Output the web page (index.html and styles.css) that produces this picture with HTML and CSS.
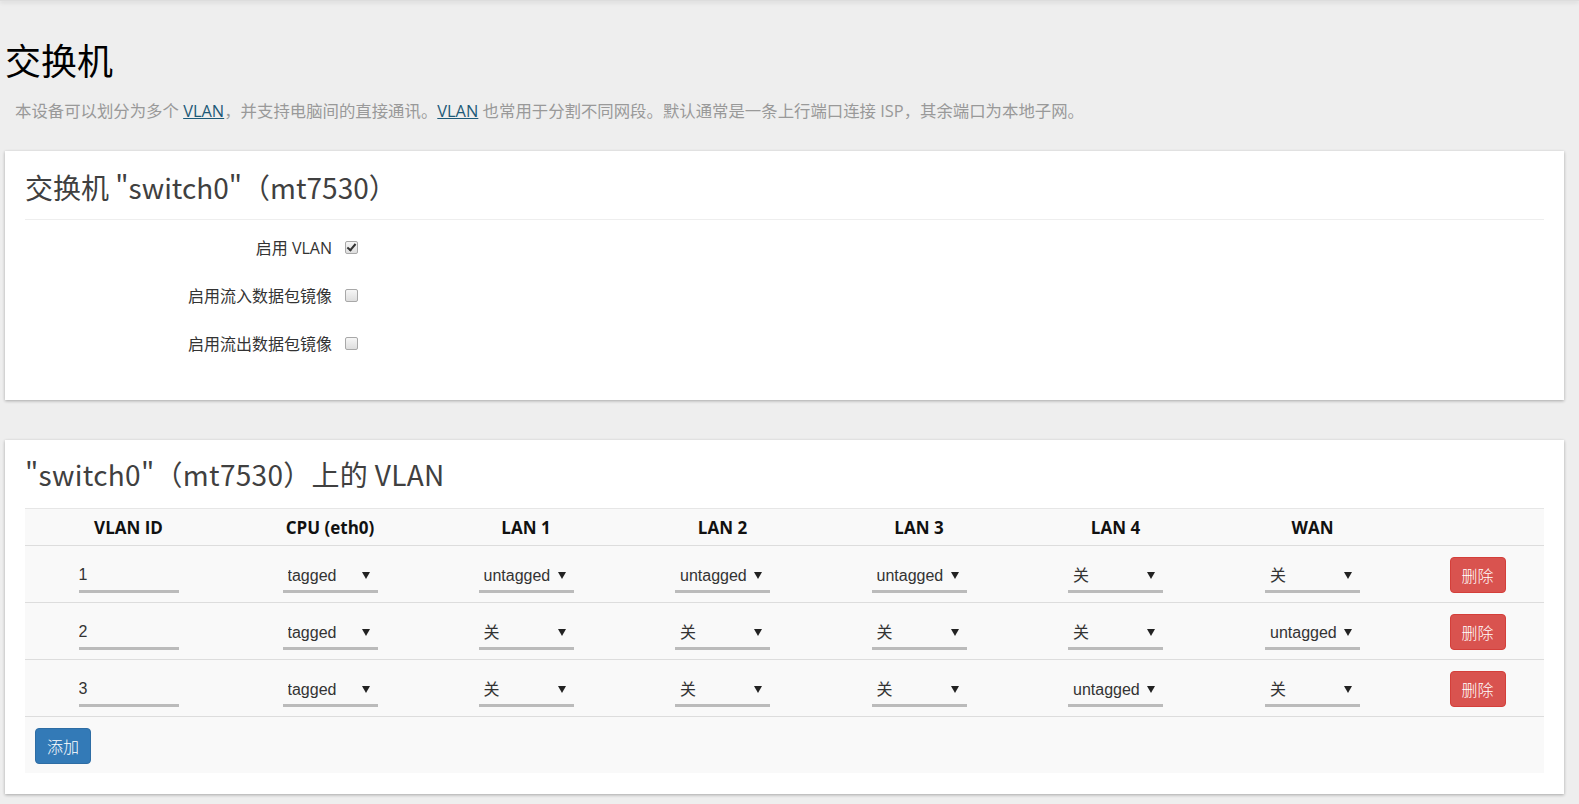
FILE: index.html
```html
<!DOCTYPE html>
<html lang="zh-CN">
  <head>
    <meta charset="UTF-8" />
    <title>交换机</title>
    <link rel="stylesheet" href="styles.css">
  </head>
  <body>
    <div class="top-shadow"></div>
    <div class="main">
      <h2 class="page-title">交换机</h2>
      <div class="page-desc">
        本设备可以划分为多个 <a href="#">VLAN</a>，并支持电脑间的直接通讯。<a href="#">VLAN</a> 也常用于分割不同网段。默认通常是一条上行端口连接 ISP，其余端口为本地子网。
      </div>

      <div class="card card-switch">
        <h3 class="card-title">交换机 "switch0"（mt7530）</h3>
        <div class="form-rows">
          <div class="form-row">
            <label class="form-label">启用 VLAN</label>
            <input type="checkbox" class="cbx" checked />
          </div>
          <div class="form-row">
            <label class="form-label">启用流入数据包镜像</label>
            <input type="checkbox" class="cbx" />
          </div>
          <div class="form-row">
            <label class="form-label">启用流出数据包镜像</label>
            <input type="checkbox" class="cbx" />
          </div>
        </div>
      </div>

      <div class="card">
        <h3 class="card-title vlan-title">"switch0"（mt7530）上的 VLAN</h3>
        <table class="vlan-table">
          <colgroup>
            <col class="col-id" />
            <col class="col-port" />
            <col class="col-port" />
            <col class="col-port-w" />
            <col class="col-port" />
            <col class="col-port-w" />
            <col class="col-port-w" />
            <col />
          </colgroup>
          <thead>
            <tr>
              <th>VLAN ID</th>
              <th>CPU (eth0)</th>
              <th>LAN 1</th>
              <th>LAN 2</th>
              <th>LAN 3</th>
              <th>LAN 4</th>
              <th>WAN</th>
              <th></th>
            </tr>
          </thead>
          <tbody id="vlan-rows"></tbody>
          <tfoot>
            <tr>
              <td colspan="8" class="add-cell">
                <button class="btn btn-add">添加</button>
              </td>
            </tr>
          </tfoot>
        </table>
      </div>
    </div>

    <script>
      const vlans = [
        { id: 1, ports: ["tagged", "untagged", "untagged", "untagged", "关", "关"] },
        { id: 2, ports: ["tagged", "关", "关", "关", "关", "untagged"] },
        { id: 3, ports: ["tagged", "关", "关", "关", "untagged", "关"] },
      ];
      const choices = ["关", "untagged", "tagged"];

      function renderRows() {
        const body = document.getElementById("vlan-rows");
        body.innerHTML = vlans
          .map((v) => {
            const cells = v.ports
              .map((p) => {
                const opts = choices
                  .map((c) => `<option${c === p ? " selected" : ""}>${c}</option>`)
                  .join("");
                return `<td><span class="sel-wrap"><select class="port-sel">${opts}</select></span></td>`;
              })
              .join("");
            return `<tr>
              <td><input class="vid-input" type="text" value="${v.id}" /></td>
              ${cells}
              <td class="action-cell"><button class="btn btn-del">删除</button></td>
            </tr>`;
          })
          .join("");
      }

      renderRows();
    </script>
  </body>
</html>
```

FILE: styles.css
```css
html,
body {
  margin: 0;
  background-color: #eeeeee;
}
body {
  font-family: "Open Sans", "Noto Sans CJK SC", sans-serif;
  color: #333;
}
.top-shadow {
  height: 1px;
  background-color: #ddd;
  box-shadow: 0 1px 4px rgba(0, 0, 0, 0.25);
}
.main {
  padding: 0 15px 8px 5px;
}
.page-title {
  font-family: "Noto Sans CJK SC", sans-serif;
  font-size: 36px;
  font-weight: normal;
  color: #000;
  margin: 33px 0 0 0;
  line-height: 50px;
}
.page-desc {
  font-family: "Open Sans", "Noto Sans CJK SC", sans-serif;
  font-size: 16.4px;
  color: #999;
  padding: 0 10px;
  margin-top: 16px;
  line-height: 22px;
}
.page-desc a {
  color: #1d5a78;
  text-decoration: underline;
}
.card {
  background-color: #fff;
  box-shadow: 0 1px 3px rgba(0, 0, 0, 0.3);
  padding: 16px 20px 21px 20px;
  margin-top: 29px;
}
.card + .card {
  margin-top: 40px;
}
.card-switch {
  padding-bottom: 33px;
}
.card-title {
  font-family: "Noto Sans CJK SC", sans-serif;
  font-size: 28px;
  font-weight: normal;
  color: #404040;
  margin: 0;
  line-height: 40px;
  padding-bottom: 12px;
  border-bottom: 1px solid #eee;
}
.vlan-title {
  border-bottom: none;
  line-height: 37px;
  padding-bottom: 15px;
  letter-spacing: 0.3px;
}
.form-rows {
  margin-top: 3px;
}
.form-row {
  display: flex;
  align-items: center;
  height: 48px;
}
.form-label {
  font-family: "Open Sans", "Noto Sans CJK SC", sans-serif;
  font-size: 16px;
  width: 307px;
  text-align: right;
  color: #333;
  margin-right: 13px;
}
.cbx {
  appearance: none;
  width: 13px;
  height: 13px;
  margin: 0;
  border: 1px solid #a8a8a8;
  border-radius: 2px;
  background: linear-gradient(#f6f6f6, #dedede);
  position: relative;
}
.cbx:checked::after {
  content: "";
  position: absolute;
  left: 3px;
  top: 0px;
  width: 3px;
  height: 7px;
  border-right: 2px solid #333;
  border-bottom: 2px solid #333;
  transform: rotate(40deg);
}
.vlan-table {
  width: 100%;
  border-collapse: collapse;
  table-layout: fixed;
  background-color: #f9f9f9;
}
.col-id {
  width: 207px;
}
.col-port {
  width: 196px;
}
.col-port-w {
  width: 197px;
}
.vlan-table th {
  font-size: 17px;
  font-weight: bold;
  color: #111;
  height: 36px;
  padding: 0;
  border-top: 1px solid #e6e6e6;
  border-bottom: 1px solid #ddd;
}
.vlan-table td {
  padding: 15px 0 9px 0;
  text-align: center;
  vertical-align: top;
  border-bottom: 1px solid #ddd;
}
.vlan-table td.action-cell {
  padding-top: 11px;
}
.vlan-table tfoot td {
  border-bottom: none;
  text-align: left;
  padding: 11px 0 9px 10px;
}
.vid-input {
  width: 100px;
  height: 32px;
  box-sizing: border-box;
  font-family: "Liberation Sans", sans-serif;
  font-size: 16px;
  color: #333;
  border: none;
  border-bottom: 3px solid #bbb;
  background: transparent;
  padding: 5px 0 6px 0;
  outline: none;
  display: block;
  margin: 0 auto;
}
.sel-wrap {
  display: inline-block;
  position: relative;
  width: 95px;
  vertical-align: top;
}
.sel-wrap::after {
  content: "";
  position: absolute;
  right: 8px;
  top: 11px;
  border-left: 4px solid transparent;
  border-right: 4px solid transparent;
  border-top: 7px solid #222;
  pointer-events: none;
}
.port-sel {
  appearance: none;
  display: block;
  width: 100%;
  height: 32px;
  box-sizing: border-box;
  font-family: "Liberation Sans", "Noto Sans CJK SC", sans-serif;
  font-size: 16px;
  color: #333;
  border: none;
  border-bottom: 3px solid #bbb;
  border-radius: 0;
  background: transparent;
  padding: 5px 0 6px 5px;
  margin: 0;
  outline: none;
}
.btn {
  font-family: "Noto Sans CJK SC", sans-serif;
  font-size: 16px;
  font-weight: 300;
  color: #fff;
  border: 1px solid transparent;
  border-radius: 4px;
  padding: 0 11px;
  height: 36px;
  width: 56px;
  cursor: pointer;
  display: inline-block;
  vertical-align: top;
}
.btn-del {
  background-color: #d9534f;
  border-color: #d43f3a;
}
.btn-add {
  background-color: #337ab7;
  border-color: #2e6da4;
}
```
